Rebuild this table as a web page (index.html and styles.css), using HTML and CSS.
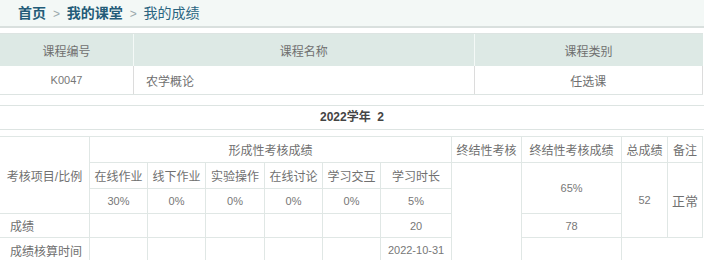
FILE: index.html
```html
<!DOCTYPE html>
<html lang="zh-CN">
<head>
    <meta charset="UTF-8">
    <meta name="viewport" content="width=device-width, initial-scale=1.0">
    <title>我的成绩</title>
    <link rel="stylesheet" href="styles.css">
</head>
<body>

    <div class="crumbs">
        <a href="#">首页</a>
        <span class="sep">&gt;</span>
        <a href="#">我的课堂</a>
        <span class="sep">&gt;</span>
        <span class="here">我的成绩</span>
    </div>

    <table class="course">
        <tr>
            <th class="c-no">课程编号</th>
            <th>课程名称</th>
            <th class="c-type">课程类别</th>
        </tr>
        <tr>
            <td class="num">K0047</td>
            <td class="name">农学概论</td>
            <td>任选课</td>
        </tr>
    </table>

    <div class="term">2022学年&nbsp;&nbsp;2</div>

    <table class="grades">
        <colgroup>
            <col style="width:90px">
            <col style="width:58px">
            <col style="width:58px">
            <col style="width:59px">
            <col style="width:58px">
            <col style="width:58px">
            <col style="width:71px">
            <col style="width:70px">
            <col style="width:100px">
            <col style="width:46px">
            <col style="width:35px">
        </colgroup>
        <tr class="r1">
            <td rowspan="3">考核项目/比例</td>
            <td colspan="6">形成性考核成绩</td>
            <td>终结性考核</td>
            <td>终结性考核成绩</td>
            <td>总成绩</td>
            <td>备注</td>
        </tr>
        <tr class="r2">
            <td>在线作业</td>
            <td>线下作业</td>
            <td>实验操作</td>
            <td>在线讨论</td>
            <td>学习交互</td>
            <td>学习时长</td>
            <td rowspan="4"></td>
            <td rowspan="2" class="num">65%</td>
            <td rowspan="3" class="num">52</td>
            <td rowspan="3" class="note">正常</td>
        </tr>
        <tr class="r3">
            <td class="num">30%</td>
            <td class="num">0%</td>
            <td class="num">0%</td>
            <td class="num">0%</td>
            <td class="num">0%</td>
            <td class="num">5%</td>
        </tr>
        <tr class="r4">
            <td class="label">成绩</td>
            <td></td>
            <td></td>
            <td></td>
            <td></td>
            <td></td>
            <td class="num">20</td>
            <td class="num">78</td>
        </tr>
        <tr class="r5">
            <td class="label">成绩核算时间</td>
            <td></td>
            <td></td>
            <td></td>
            <td></td>
            <td></td>
            <td class="num">2022-10-31</td>
            <td></td>
            <td colspan="2" class="blank"></td>
        </tr>
    </table>

</body>
</html>
```

FILE: styles.css
```css
body {
    margin: 0;
    padding: 0;
    font-family: "Liberation Sans", "Noto Sans CJK SC", sans-serif;
    color: #707070;
    background: #fff;
    overflow: hidden;
}

/* 面包屑导航 */
.crumbs {
    height: 26px;
    line-height: 26px;
    padding-left: 18px;
    background: #f3f8f6;
    border-bottom: 2px solid #d9e0de;
    font-size: 14px;
    color: #2a6580;
}

.crumbs a {
    color: #235c78;
    font-weight: bold;
    text-decoration: none;
}

.crumbs .sep {
    color: #9aa8ad;
    font-size: 12px;
    margin: 0 3px;
}

.crumbs .here {
    font-weight: normal;
}

table {
    border-collapse: collapse;
    table-layout: fixed;
    margin-left: -1px;
    width: 704px;
}

/* 课程信息 */
.course {
    margin-top: 5px;
    font-size: 12px;
}

.course th {
    height: 30px;
    font-weight: normal;
    color: #707070;
    background: #dde9e5;
    border-top: 1px solid #dde4e2;
    border-left: 1px solid #f4f9f7;
}

.course .c-no {
    width: 131px;
}

.course .c-type {
    width: 226px;
}

.course td {
    height: 26px;
    text-align: center;
    border-left: 1px solid #dcdcdc;
    border-right: 1px solid #dcdcdc;
    border-bottom: 1px solid #dde4e2;
}

.course td.name {
    text-align: left;
    padding-left: 12px;
}

.num {
    font-size: 11px;
    color: #777;
}

/* 学年 */
.term {
    margin-top: 10px;
    height: 23px;
    line-height: 23px;
    border-top: 1px solid #dde4e2;
    border-bottom: 1px solid #dde4e2;
    text-align: center;
    font-size: 12px;
    font-weight: bold;
    color: #444;
}

/* 成绩表 */
.grades {
    margin-top: 6px;
    font-size: 12px;
}

.grades td {
    border: 1px solid #e0e7e5;
    text-align: center;
    padding: 0;
}

.grades tr.r1 td {
    height: 25px;
}

.grades tr.r2 td {
    height: 25px;
}

.grades tr.r3 td {
    height: 24px;
}

.grades tr.r4 td {
    height: 23px;
}

.grades tr.r5 td {
    height: 24px;
}

.grades td.label {
    text-align: left;
    padding-left: 10px;
}

.grades td.note {
    font-size: 13px;
}

.grades td.blank {
    border-right-color: #fff;
    border-bottom-color: #fff;
}
```
